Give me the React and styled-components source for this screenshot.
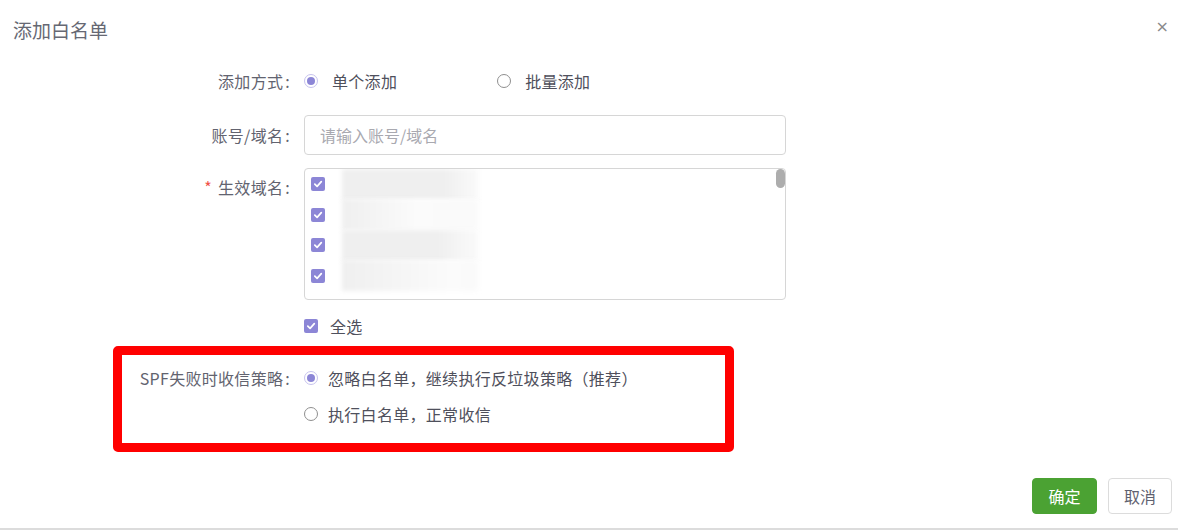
import styled, { createGlobalStyle } from "styled-components";

const GlobalStyle = createGlobalStyle`
  html, body {
    margin: 0;
    padding: 0;
    background: #fff;
  }
  * {
    box-sizing: border-box;
  }
`;

const purple = "#8c86d6";

const Dialog = styled.div`
  width: 1178px;
  height: 530px;
  background: #fff;
  border-bottom: 2px solid #dcdcdc;
  font-family: "Noto Sans CJK SC", "Noto Sans", sans-serif;
  color: #5f6170;
  font-size: 16px;
  display: flex;
  flex-direction: column;
`;

const Header = styled.div`
  height: 60px;
  padding: 0 9px 0 13px;
  display: flex;
  align-items: center;
  justify-content: space-between;
`;

const Title = styled.div`
  font-size: 19px;
  color: #666873;
  margin-top: -1px;
`;

const Close = styled.button`
  border: 0;
  background: none;
  padding: 0;
  color: #8a8a8a;
  font-size: 16px;
  line-height: 1;
  margin-top: -6px;
  font-family: "DejaVu Sans", sans-serif;
  cursor: pointer;
`;

const Body = styled.div`
  display: flex;
  flex-direction: column;
  flex: 1;
`;

const Row = styled.div`
  display: grid;
  grid-template-columns: ${(p) => p.$labelWidth || 296}px 482px;
  column-gap: 8px;
  align-items: ${(p) => (p.$top ? "start" : "center")};
  margin-top: ${(p) => p.$mt || 0}px;
  min-height: ${(p) => p.$h || 32}px;
`;

const Label = styled.label`
  text-align: right;
  color: #62636f;
  line-height: ${(p) => p.$lh || 20}px;
  white-space: nowrap;
  letter-spacing: 0.3px;
`;

const Colon = styled.span`
  padding: 0 6px 0 2px;
`;

const Required = styled.span`
  color: #f0524b;
  margin-right: 6px;
`;

const RadioGroup = styled.div`
  display: flex;
  flex-direction: ${(p) => (p.$column ? "column" : "row")};
  gap: ${(p) => p.$gap}px;
`;

const Option = styled.span`
  display: flex;
  align-items: center;
  gap: ${(p) => p.$gap}px;
  height: ${(p) => p.$h || 20}px;
  color: #4f505c;
  white-space: nowrap;
  letter-spacing: 0.3px;
`;

const RadioDot = styled.span`
  width: 14px;
  height: 14px;
  border-radius: 50%;
  border: 1px solid ${(p) => (p.$checked ? "#c7c3ee" : "#8f8f8f")};
  background: #fff;
  display: inline-flex;
  align-items: center;
  justify-content: center;
  flex: none;

  &::after {
    content: "";
    width: 8px;
    height: 8px;
    border-radius: 50%;
    background: ${(p) => (p.$checked ? purple : "transparent")};
  }
`;

const Check = styled.span`
  width: 14px;
  height: 14px;
  border-radius: 2px;
  background: ${purple};
  display: inline-flex;
  align-items: center;
  justify-content: center;
  flex: none;
`;

const Input = styled.input`
  width: 482px;
  height: 40px;
  border: 1px solid #d6d6d6;
  border-radius: 4px;
  padding: 0 15px;
  font-family: inherit;
  font-size: 16px;
  color: #4f505c;
  outline: none;

  &::placeholder {
    color: #a9a9b0;
  }
`;

const DomainBox = styled.div`
  position: relative;
  width: 482px;
  height: 132px;
  border: 1px solid #d6d6d6;
  border-radius: 4px;
  padding: 0 0 0 6px;
  overflow: hidden;
`;

const DomainItem = styled.div`
  display: flex;
  align-items: center;
  gap: 17px;
  height: 30.5px;
`;

const Blurred = styled.span`
  width: 136px;
  height: 31px;
  background: linear-gradient(
    to right,
    #efefef,
    ${(p) => (p.$light ? "#fbfbfb" : "#efefef")} ${(p) => p.$stop}%,
    #fafafa
  );
  filter: blur(2px);
`;

const Thumb = styled.span`
  position: absolute;
  right: 0;
  top: 0;
  width: 9px;
  height: 19px;
  border-radius: 5px;
  background: #adadad;
`;

const Highlight = styled.div`
  margin: 4px 0 0 113px;
  width: 621px;
  height: 106px;
  border: 9px solid #ff0000;
  border-radius: 5px;
  padding-top: 5px;
`;

const Footer = styled.div`
  margin-top: auto;
  padding: 0 6px 14px 0;
  display: flex;
  justify-content: flex-end;
  gap: 11px;
`;

const Button = styled.button`
  height: 36px;
  width: ${(p) => p.$w}px;
  border-radius: 4px;
  font-family: inherit;
  font-size: 16px;
  cursor: pointer;
  border: 1px solid ${(p) => (p.$primary ? "#4ba233" : "#dcdcdc")};
  background: ${(p) => (p.$primary ? "#4ba233" : "#fff")};
  color: ${(p) => (p.$primary ? "#fff" : "#5f6170")};
`;

const CheckIcon = () => (
  <svg width="10" height="10" viewBox="0 0 10 10">
    <path
      d="M1.8 5.2 L4.1 7.4 L8.3 2.6"
      fill="none"
      stroke="#fff"
      strokeWidth="1.7"
      strokeLinecap="round"
      strokeLinejoin="round"
    />
  </svg>
);

const domains = [75, 55, 70, 80];

const App = () => {
  return (
    <>
      <GlobalStyle />
      <Dialog>
        <Header>
          <Title>添加白名单</Title>
          <Close>×</Close>
        </Header>
        <Body>
          <Row $mt={5}>
            <Label>
              添加方式<Colon>:</Colon>
            </Label>
            <RadioGroup $gap={100}>
              <Option $gap={14}>
                <RadioDot $checked />
                单个添加
              </Option>
              <Option $gap={14}>
                <RadioDot />
                批量添加
              </Option>
            </RadioGroup>
          </Row>
          <Row $mt={18} $h={40}>
            <Label>
              账号/域名<Colon>:</Colon>
            </Label>
            <Input placeholder="请输入账号/域名" />
          </Row>
          <Row $mt={13} $top>
            <Label $lh={38}>
              <Required>*</Required>生效域名<Colon>:</Colon>
            </Label>
            <DomainBox>
              {domains.map((stop, i) => (
                <DomainItem key={i}>
                  <Check>
                    <CheckIcon />
                  </Check>
                  <Blurred $stop={stop} $light={i % 2 === 1} />
                </DomainItem>
              ))}
              <Thumb />
            </DomainBox>
          </Row>
          <Row $mt={10}>
            <span />
            <Option $gap={12}>
              <Check>
                <CheckIcon />
              </Check>
              全选
            </Option>
          </Row>
          <Highlight>
            <Row $labelWidth={174} $top>
              <Label $lh={36}>
                SPF失败时收信策略<Colon>:</Colon>
              </Label>
              <RadioGroup $column $gap={0}>
                <Option $gap={10} $h={36}>
                  <RadioDot $checked />
                  忽略白名单，继续执行反垃圾策略（推荐）
                </Option>
                <Option $gap={10} $h={36}>
                  <RadioDot />
                  执行白名单，正常收信
                </Option>
              </RadioGroup>
            </Row>
          </Highlight>
          <Footer>
            <Button $primary $w={65}>
              确定
            </Button>
            <Button $w={64}>取消</Button>
          </Footer>
        </Body>
      </Dialog>
    </>
  );
};

export default App;
